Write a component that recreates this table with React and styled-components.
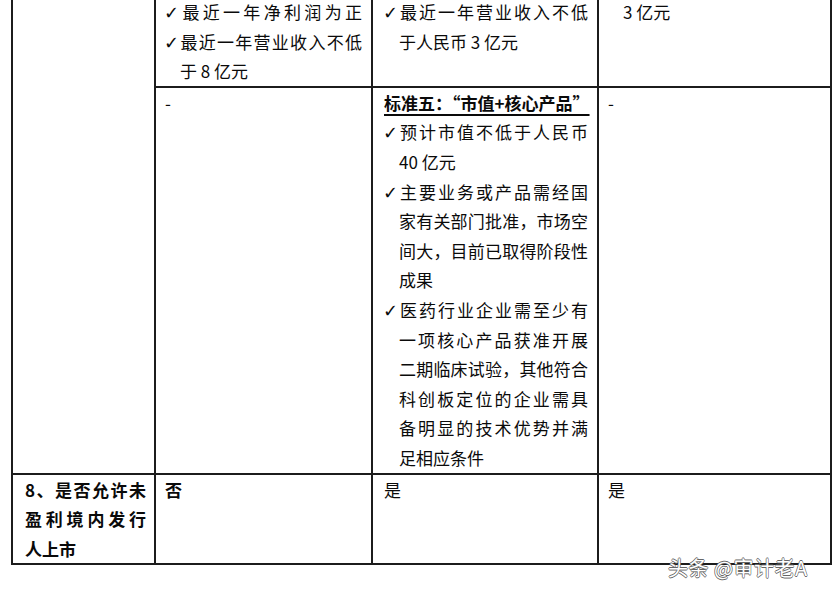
import React from "react";
import styled, { createGlobalStyle } from "styled-components";

const GlobalStyle = createGlobalStyle`
  html, body { margin: 0; padding: 0; background: #fff; }
  body {
    font-family: "Noto Sans CJK SC", "Noto Sans", sans-serif;
    color: #0a0a0a;
  }
`;

const Page = styled.div`
  position: relative;
  width: 832px;
  height: 592px;
  overflow: hidden;
  background: #fff;
`;

const Table = styled.table`
  margin: -5px 0 0 11px;
  width: 819px;
  border-collapse: collapse;
  table-layout: fixed;
  font-size: 17px;
  line-height: 29.6px;
`;

const Cell = styled.td`
  border: 2px solid #1c1c1c;
  vertical-align: top;
  padding: ${(p) => p.$pad || "0 9px 0 9px"};
`;

const Line = styled.div`
  height: 29.6px;
  line-height: 29.6px;
  white-space: nowrap;
  padding-left: ${(p) => (p.$indent ? "15px" : "0")};
  text-align: ${(p) => (p.$full ? "justify" : "left")};
  text-align-last: ${(p) => (p.$full ? "justify" : "left")};
  font-weight: ${(p) => (p.$bold ? 700 : 400)};
`;

const Title = styled(Line)`
  font-weight: 700;
  text-decoration: underline;
  text-underline-offset: 4px;
  text-decoration-thickness: 1.5px;
`;

const Check = styled.span`
  font-family: "DejaVu Sans", sans-serif;
  font-size: 18px;
  line-height: 1;
  margin-left: -1px;
`;

const Watermark = styled.div`
  position: absolute;
  left: 668px;
  top: 554px;
  font-size: 20px;
  line-height: 28px;
  color: #fff;
  letter-spacing: 0.5px;
  text-shadow: 0.7px 0 0 #666, -0.7px 0 0 #666, 0 0.7px 0 #666, 0 -0.7px 0 #666;
`;

const C = () => <Check>✓</Check>;

export default function App() {
  return (
    <Page>
      <GlobalStyle />
      <Table>
        <colgroup>
          <col style={{ width: "143px" }} />
          <col style={{ width: "217px" }} />
          <col style={{ width: "226px" }} />
          <col style={{ width: "233px" }} />
        </colgroup>
        <tbody>
          <tr>
            <Cell rowSpan={2} />
            <Cell>
              <Line $full><C />最近一年净利润为正</Line>
              <Line $full><C />最近一年营业收入不低</Line>
              <Line $indent>于 8 亿元</Line>
            </Cell>
            <Cell $pad="0 9px 0 11px">
              <Line $full><C />最近一年营业收入不低</Line>
              <Line $indent>于人民币 3 亿元</Line>
            </Cell>
            <Cell>
              <Line $indent>3 亿元</Line>
            </Cell>
          </tr>
          <tr>
            <Cell>
              <Line>-</Line>
            </Cell>
            <Cell $pad="0 9px 0 11px">
              <Title $full>标准五：“市值+核心产品”</Title>
              <Line $full><C />预计市值不低于人民币</Line>
              <Line $indent>40 亿元</Line>
              <Line $full><C />主要业务或产品需经国</Line>
              <Line $full $indent>家有关部门批准，市场空</Line>
              <Line $full $indent>间大，目前已取得阶段性</Line>
              <Line $indent>成果</Line>
              <Line $full><C />医药行业企业需至少有</Line>
              <Line $full $indent>一项核心产品获准开展</Line>
              <Line $full $indent>二期临床试验，其他符合</Line>
              <Line $full $indent>科创板定位的企业需具</Line>
              <Line $full $indent>备明显的技术优势并满</Line>
              <Line $indent>足相应条件</Line>
            </Cell>
            <Cell>
              <Line>-</Line>
            </Cell>
          </tr>
          <tr>
            <Cell $pad="0 8px 0 12px">
              <Line $full $bold>8、是否允许未</Line>
              <Line $full $bold>盈利境内发行</Line>
              <Line $bold>人上市</Line>
            </Cell>
            <Cell>
              <Line $bold>否</Line>
            </Cell>
            <Cell $pad="0 9px 0 11px">
              <Line>是</Line>
            </Cell>
            <Cell>
              <Line>是</Line>
            </Cell>
          </tr>
        </tbody>
      </Table>
      <Watermark>头条 @审计老A</Watermark>
    </Page>
  );
}
